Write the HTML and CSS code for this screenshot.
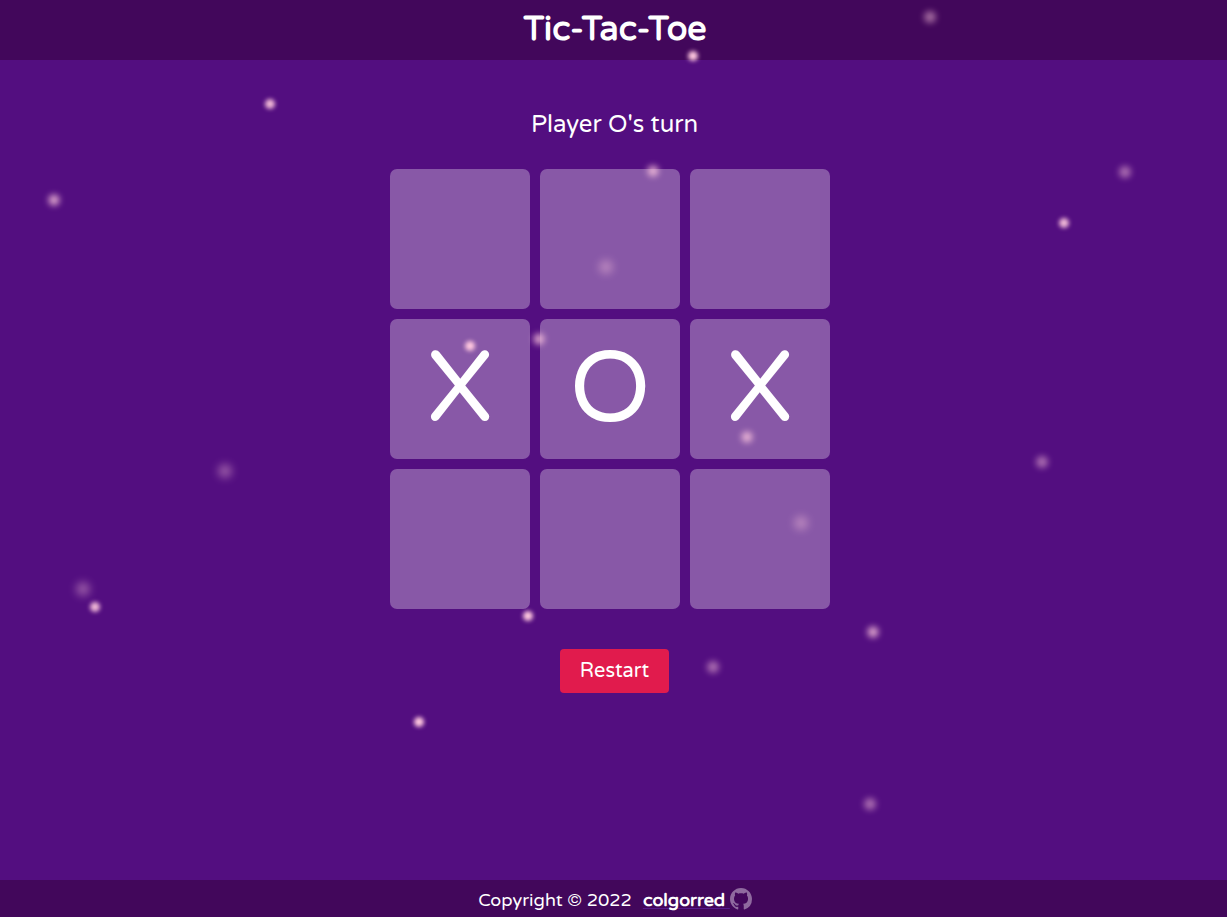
FILE: index.html
```
<!DOCTYPE html>
<html lang="en">
<head>
<meta charset="utf-8">
<meta name="viewport" content="width=device-width, initial-scale=1">
<title>Tic-Tac-Toe</title>
<link rel="stylesheet" href="styles.css">
</head>
<body>
<header class="header"><h1 class="title">Tic-Tac-Toe</h1></header>
<main class="game">
  <h2 class="status">Player O's turn</h2>
  <div class="board">
    <button class="cell" type="button" aria-label="Top left"></button>
    <button class="cell" type="button" aria-label="Top center"></button>
    <button class="cell" type="button" aria-label="Top right"></button>
    <button class="cell" type="button">X</button>
    <button class="cell" type="button">O</button>
    <button class="cell" type="button">X</button>
    <button class="cell" type="button" aria-label="Bottom left"></button>
    <button class="cell" type="button" aria-label="Bottom center"></button>
    <button class="cell" type="button" aria-label="Bottom right"></button>
  </div>
  <button class="restart" type="button">Restart</button>
</main>
<footer class="footer">
  <span>Copyright © 2022</span>
  <a class="author" href="#">colgorred <svg class="github" viewBox="0 0 16 16" aria-hidden="true"><path fill="currentColor" d="M8 0C3.58 0 0 3.58 0 8c0 3.54 2.29 6.53 5.47 7.59.4.07.55-.17.55-.38 0-.19-.01-.82-.01-1.49-2.01.37-2.53-.49-2.69-.94-.09-.23-.48-.94-.82-1.13-.28-.15-.68-.52-.01-.53.63-.01 1.08.58 1.23.82.72 1.21 1.87.87 2.33.66.07-.52.28-.87.51-1.07-1.78-.2-3.64-.89-3.64-3.95 0-.87.31-1.59.82-2.15-.08-.2-.36-1.02.08-2.12 0 0 .67-.21 2.2.82.64-.18 1.32-.27 2-.27s1.36.09 2 .27c1.53-1.04 2.2-.82 2.2-.82.44 1.1.16 1.92.08 2.12.51.56.82 1.27.82 2.15 0 3.07-1.87 3.75-3.65 3.95.29.25.54.73.54 1.48 0 1.07-.01 1.93-.01 2.2 0 .21.15.46.55.38A8.01 8.01 0 0 0 16 8c0-4.42-3.58-8-8-8z"/></svg></a>
</footer>
<div class="sparks" aria-hidden="true">
  <i class="spark near" style="left:693px;top:56px"></i>
  <i class="spark near" style="left:470px;top:346px"></i>
  <i class="spark near" style="left:528px;top:616px"></i>
  <i class="spark near" style="left:419px;top:722px"></i>
  <i class="spark close" style="left:270px;top:104px"></i>
  <i class="spark close" style="left:1064px;top:223px"></i>
  <i class="spark close" style="left:95px;top:607px"></i>
  <i class="spark middle" style="left:54px;top:200px"></i>
  <i class="spark middle" style="left:653px;top:171px"></i>
  <i class="spark middle" style="left:539px;top:339px"></i>
  <i class="spark middle" style="left:747px;top:437px"></i>
  <i class="spark middle" style="left:873px;top:632px"></i>
  <i class="spark far" style="left:1042px;top:462px"></i>
  <i class="spark far" style="left:713px;top:667px"></i>
  <i class="spark far" style="left:930px;top:17px"></i>
  <i class="spark far" style="left:1125px;top:172px"></i>
  <i class="spark far" style="left:870px;top:804px"></i>
  <i class="spark distant" style="left:606px;top:267px"></i>
  <i class="spark distant" style="left:225px;top:471px"></i>
  <i class="spark distant" style="left:83px;top:589px"></i>
  <i class="spark distant" style="left:801px;top:523px"></i>
</div>
</body>
</html>
```
FILE: styles.css
```
* { box-sizing: border-box; }

body {
  margin: 0;
  min-height: 100vh;
  display: flex;
  flex-direction: column;
  position: relative;
  background: #530e80;
  color: #fff;
  font-family: "Varela Round", Lato, "Noto Sans", sans-serif;
}

.header {
  display: flex;
  justify-content: center;
  height: 60px;
  padding-left: 3px;
  background: #42075b;
}

.title {
  margin: 0;
  font-size: 34px;
  line-height: 60px;
}

.game {
  flex: 1;
  display: flex;
  flex-direction: column;
  align-items: center;
  padding-top: 49px;
}

.status {
  margin: 0 0 28px 2px;
  font-size: 24px;
  font-weight: 400;
  line-height: 32px;
}

.board {
  display: grid;
  grid-template-columns: repeat(3, 140px);
  grid-auto-rows: 140px;
  gap: 10px;
  margin-right: 7px;
}

.cell {
  border: 0;
  border-radius: 7px;
  padding: 2px 0 0;
  background: #8858a7;
  color: #fff;
  font: 400 100px/1 "Varela Round", Lato, sans-serif;
  cursor: pointer;
}

.restart {
  margin: 40px 0 0 2px;
  padding: 0 20px;
  height: 44px;
  border: 0;
  border-radius: 4px;
  background: #e11b4d;
  color: #fff;
  font: 400 20px/42px "Varela Round", Lato, sans-serif;
  cursor: pointer;
}

.footer {
  display: flex;
  justify-content: center;
  align-items: baseline;
  gap: 11px;
  height: 37px;
  padding: 7px 0 0 3px;
  background: #42075b;
  font-size: 18px;
  line-height: 26px;
}

.author {
  color: #fff;
  font-weight: 700;
  text-decoration: underline 1px #551a8b;
  text-underline-offset: 2px;
}

.github {
  width: 22px;
  height: 22px;
  vertical-align: -4px;
  color: #8f6a9f;
}

.sparks {
  position: absolute;
  inset: 0;
  overflow: hidden;
  pointer-events: none;
}

.spark {
  position: absolute;
  border-radius: 50%;
  background: #ffc8df;
  transform: translate(-50%, -50%);
}

.near { width: 10px; height: 10px; filter: blur(2px); }
.close { width: 10px; height: 10px; filter: blur(2px); opacity: 0.9; }
.middle { width: 11px; height: 11px; filter: blur(3px); opacity: 0.8; }
.far { width: 12px; height: 12px; filter: blur(3px); opacity: 0.5; }
.distant { width: 14px; height: 14px; filter: blur(4px); opacity: 0.4; }
```
